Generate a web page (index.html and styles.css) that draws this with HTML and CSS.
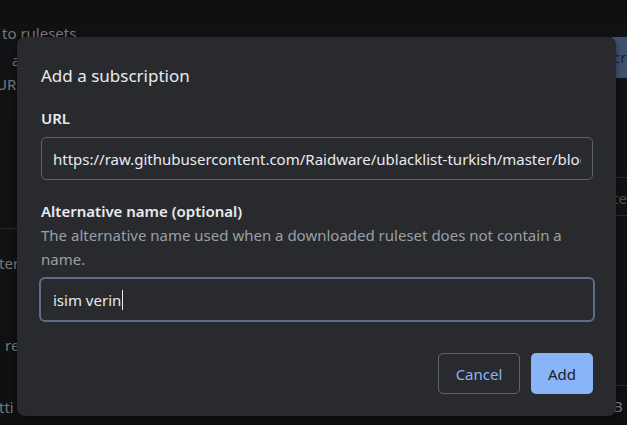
FILE: index.html
```html
<!DOCTYPE html>
<html>
<head>
    <title>Add a subscription</title>
    <link rel="stylesheet" href="styles.css">
</head>
<body>
    <div class="page">
        <div class="side left">
            <div class="row r-first">to rulesets</div>
            <div class="row r-a">a</div>
            <div class="row r-url">URL</div>
            <div class="rule l-rule"></div>
            <div class="row r-ter">ter</div>
            <div class="row r-re">re</div>
            <div class="row r-tti">tti</div>
        </div>
        <div class="side right">
            <div class="blue-btn">cribe</div>
            <div class="rule r1"></div>
            <div class="row rmid">te</div>
            <div class="rule r2"></div>
            <div class="rule r3"></div>
            <div class="row rlast">B</div>
        </div>
    </div>

    <div class="dialog">
        <h2 class="title">Add a subscription</h2>
        <label class="label" for="url">URL</label>
        <input class="field" id="url" type="text" value="https://raw.githubusercontent.com/Raidware/ublacklist-turkish/master/blocklist.txt">
        <label class="label alt" for="name">Alternative name (optional)</label>
        <p class="hint">The alternative name used when a downloaded ruleset does not contain a name.</p>
        <div class="field focused"><span>isim verin</span><span class="caret"></span></div>
        <div class="actions">
            <button class="btn cancel">Cancel</button>
            <button class="btn add">Add</button>
        </div>
    </div>
</body>
</html>
```

FILE: styles.css
```css
* { box-sizing: border-box; }
html, body { margin: 0; height: 100%; }
body { background: #0f1011; font-family: "Noto Sans", "Open Sans", Arial, sans-serif; color: #e8eaed; overflow: hidden; }

.page { display: flex; justify-content: space-between; height: 425px; background: linear-gradient(#0e0e0f 0, #111214 40px, #0f1011 100%); }
.side { display: flex; flex-direction: column; font-size: 15px; color: #76787b; }
.left { width: 17px; padding-top: 21px; }
.right { width: 15px; padding-top: 37px; overflow: hidden; }
.row { white-space: nowrap; height: 24px; line-height: 24px; }
.rule { height: 1px; background: #2a2b2e; flex: none; }

.r-first { padding-left: 2px; }
.r-a { margin-top: 3px; padding-left: 12px; }
.r-url { margin-left: -4px; }
.l-rule { margin-top: 132px; }
.r-ter { margin-top: 22px; margin-left: -1px; }
.r-re { margin-top: 58px; padding-left: 5px; }
.r-tti { margin-top: 38px; margin-left: -1px; }

.blue-btn { height: 41px; line-height: 41px; background: #3f516e; color: #1b2230; padding-left: 1px; white-space: nowrap; flex: none; }
.r1 { margin-top: 99px; }
.rmid { margin-top: 8px; color: #4e5053; padding-left: 1px; }
.r2 { margin-top: 5px; }
.r3 { margin-top: 169px; }
.rlast { margin-top: 8px; padding-left: 1px; }

.dialog { position: absolute; left: 17px; top: 37px; width: 599px; height: 379px; background: #292a2d; border-radius: 8px; padding: 24px 23px 0 24px; display: flex; flex-direction: column; box-shadow: 0 2px 6px rgba(0,0,0,0.4); }
.title { margin: 0; font-size: 17px; font-weight: 400; line-height: 30px; color: #e8eaed; }
.label { font-size: 15px; font-weight: 600; line-height: 20px; margin-top: 17px; color: #e8eaed; }
.label.alt { margin-top: 21px; }
.field { margin-top: 9px; width: 552px; height: 43px; background: #292a2d; border: 1px solid #5f6368; border-radius: 5px; color: #e8eaed; font-family: inherit; font-size: 15px; padding: 0 11px; outline: none; }
.hint { margin: 2px 0 0; font-size: 15px; line-height: 24px; color: #9aa0a6; width: 540px; }
.field.focused { display: flex; align-items: center; margin: 6px 0 0 -2px; width: 556px; height: 45px; border: 2px solid #5e6d88; border-radius: 6px; padding-left: 12px; }
.caret { width: 1px; height: 20px; background: #e8eaed; margin-left: 1px; }

.actions { display: flex; justify-content: flex-end; gap: 11px; margin-top: 31px; }
.btn { height: 41px; border-radius: 5px; font-family: inherit; font-size: 15px; padding: 0; cursor: pointer; }
.cancel { width: 82px; background: transparent; border: 1px solid #5f6368; color: #8ab4f8; }
.add { width: 62px; background: #8ab4f8; border: none; color: #202124; }
```
